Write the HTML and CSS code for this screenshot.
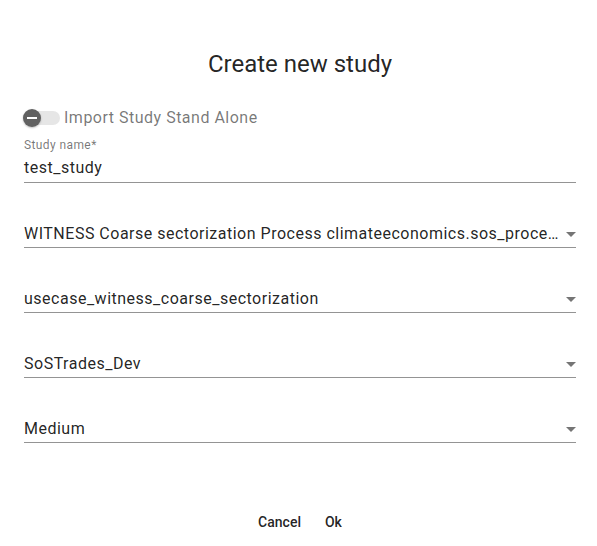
FILE: index.html
```html
<!DOCTYPE html>
<html>
<head>
<meta charset="utf-8">
<link rel="stylesheet" href="styles.css">
</head>
<body>
<div class="dialog">
  <h1 class="title">Create new study</h1>
  <div class="toggle-row">
    <span class="toggle"><span class="track"></span><span class="thumb"><span class="minus"></span></span></span>
    <span class="toggle-label">Import Study Stand Alone</span>
  </div>
  <div class="field first">
    <div class="label">Study name*</div>
    <div class="value">test_study</div>
  </div>
  <div class="field select">
    <div class="value"><span class="text">WITNESS Coarse sectorization Process climateeconomics.sos_processes.iam.witness</span><span class="arrow"></span></div>
  </div>
  <div class="field select">
    <div class="value"><span class="text">usecase_witness_coarse_sectorization</span><span class="arrow"></span></div>
  </div>
  <div class="field select">
    <div class="value"><span class="text">SoSTrades_Dev</span><span class="arrow"></span></div>
  </div>
  <div class="field select">
    <div class="value"><span class="text">Medium</span><span class="arrow"></span></div>
  </div>
  <div class="actions">
    <button class="btn">Cancel</button>
    <button class="btn">Ok</button>
  </div>
</div>
</body>
</html>
```
FILE: styles.css
```css
html, body {
  margin: 0;
  padding: 0;
  background: #ffffff;
}
body {
  font-family: Roboto, "Liberation Sans", sans-serif;
  color: rgba(0, 0, 0, 0.87);
}
.dialog {
  padding: 48px 21px 0 24px;
  display: flex;
  flex-direction: column;
}
.title {
  margin: 0 0 26px;
  font-size: 24px;
  font-weight: 400;
  line-height: 32px;
  text-align: center;
  color: rgba(0, 0, 0, 0.87);
}
.toggle-row {
  display: flex;
  align-items: center;
  height: 24px;
}
.toggle {
  position: relative;
  width: 36px;
  height: 14px;
  margin-right: 4px;
}
.track {
  display: block;
  width: 36px;
  height: 14px;
  border-radius: 7px;
  background: #e6e6e6;
}
.thumb {
  position: absolute;
  left: -1px;
  top: -2px;
  width: 18px;
  height: 18px;
  border-radius: 50%;
  background: #616161;
  display: flex;
  align-items: center;
  justify-content: center;
  box-shadow: 0 1px 2px rgba(0,0,0,0.25);
}
.minus {
  width: 10px;
  height: 2px;
  background: #ffffff;
}
.toggle-label {
  font-size: 16px;
  letter-spacing: 0.5px;
  color: rgba(0, 0, 0, 0.54);
  line-height: 24px;
}
.field {
  border-bottom: 1px solid rgba(0, 0, 0, 0.42);
  margin-top: 39px;
}
.field.first {
  margin-top: 8px;
}
.label {
  font-size: 12px;
  letter-spacing: 0.4px;
  line-height: 14px;
  height: 14px;
  margin-bottom: 5px;
  color: rgba(0, 0, 0, 0.54);
}
.value {
  font-size: 16px;
  letter-spacing: 0.5px;
  line-height: 20px;
  height: 20px;
  padding-top: 1px;
  padding-bottom: 4px;
  display: flex;
  align-items: center;
}
.select .value {
  padding-top: 2px;
  padding-bottom: 3px;
}
.value .text {
  flex: 1;
  min-width: 0;
  white-space: nowrap;
  overflow: hidden;
  text-overflow: ellipsis;
  margin-right: 6px;
}
.arrow {
  width: 0;
  height: 0;
  border-left: 5px solid transparent;
  border-right: 5px solid transparent;
  border-top: 5px solid rgba(0, 0, 0, 0.54);
  margin-top: 1px;
}
.actions {
  display: flex;
  justify-content: center;
  gap: 8px;
  margin-top: 61px;
}
.btn {
  font-family: Roboto, "Liberation Sans", sans-serif;
  font-size: 14px;
  font-weight: 500;
  color: rgba(0, 0, 0, 0.87);
  background: transparent;
  border: none;
  padding: 0 8px;
  height: 36px;
  line-height: 36px;
}
```
